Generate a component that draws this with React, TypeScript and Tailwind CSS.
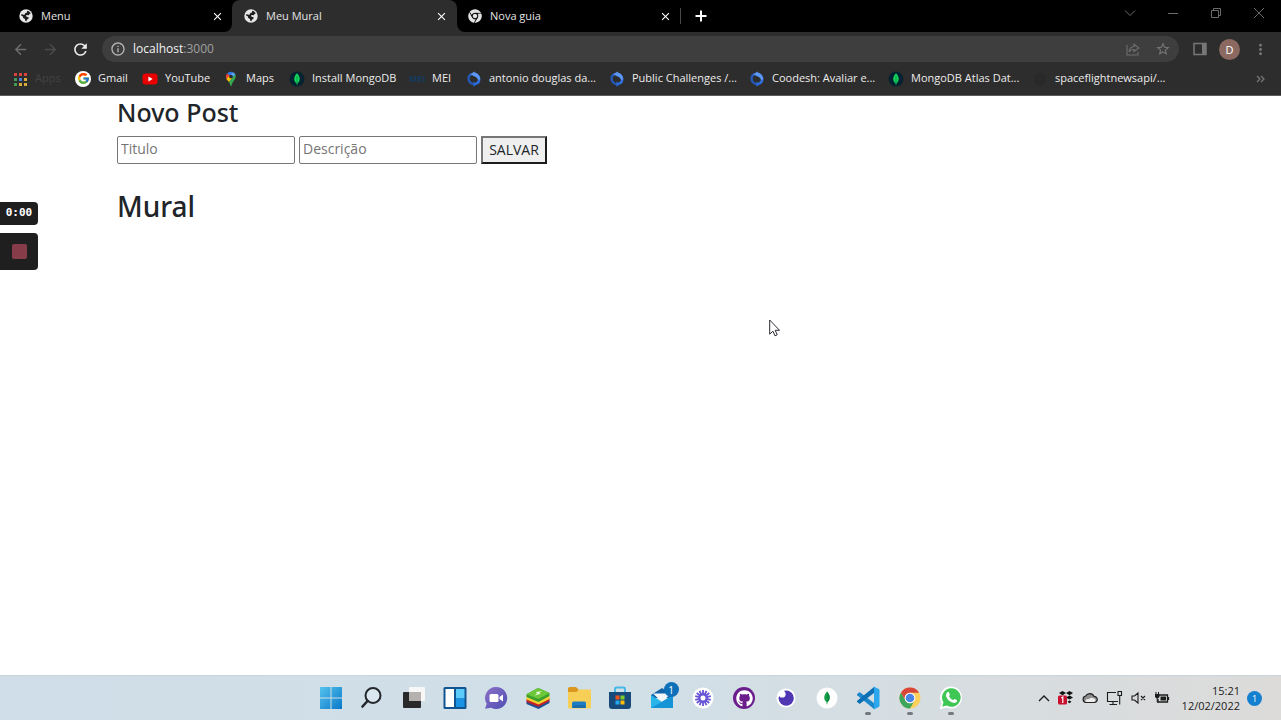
import type { ReactNode } from "react";
import { FaChrome, FaGithub } from "react-icons/fa";
import { FcGoogle } from "react-icons/fc";
import {
  MdArrowBack,
  MdArrowForward,
  MdClose,
  MdInfoOutline,
  MdMoreVert,
  MdOutlineStarBorder,
  MdRefresh,
} from "react-icons/md";

/* ---------- browser tabs ---------- */

function GlobeIcon() {
  return (
    <svg width="14" height="14">
      <circle cx="7" cy="7" r="6.700" fill="#e6e6e6" />
      <path d="M8.200 1.700c1.600.3 3 1.300 3.700 2.700l-1.200.3-.9 1.500-2.200-.2-.7 1 1.300.9 1.500.4-.3 1.400-1.500 1-.5 1.600-1-.2-.5-2-1.900-1.300-.2-1.500L2 6.500l.6-1.600 1.600.9 1.600-.3.600-1.500 1.600-.6z" fill="#1c1c1c" />
    </svg>
  );
}

function Tab({ title, icon, active, className }: { title: string; icon: ReactNode; active?: boolean; className: string }) {
  return (
    <div
      role="tab"
      aria-selected={!!active}
      className={`flex h-8 min-w-0 items-center gap-2 text-[11px] text-[#e4e4e4] ${active ? "rounded-t-lg bg-[#2d2d2d]" : "bg-black"} ${className}`}
    >
      {icon}
      <span className="grow truncate">{title}</span>
      <button type="button" aria-label={`Fechar ${title}`} className="text-white">
        <MdClose size={13} />
      </button>
    </div>
  );
}

function WindowControls() {
  return (
    <div className="ml-auto flex h-[26px] items-center pr-px text-[#6b6b6b]">
      <button type="button" aria-label="Pesquisar guias" className="flex w-[43px] justify-center">
        <svg width="12" height="12" fill="none" stroke="currentColor"><path d="M1 3.500 6 8.500l5-5" /></svg>
      </button>
      <button type="button" aria-label="Minimizar" className="flex w-[43px] justify-center">
        <svg width="12" height="12" fill="none" stroke="currentColor"><path d="M1 6.500h10" /></svg>
      </button>
      <button type="button" aria-label="Restaurar" className="flex w-[43px] justify-center">
        <svg width="12" height="12" fill="none" stroke="currentColor"><path d="M1.500 3.500h7v7h-7zM3.500 3V1.500h7v7H9" /></svg>
      </button>
      <button type="button" aria-label="Fechar" className="flex w-[43px] justify-center">
        <svg width="12" height="12" fill="none" stroke="currentColor"><path d="m1 1 10 10M11 1 1 11" /></svg>
      </button>
    </div>
  );
}

/* ---------- bookmark icons ---------- */

const dots = ["#d9453d", "#d9453d", "#d9453d", "#3f9a57", "#4a7fd6", "#d9a93a", "#3f9a57", "#d9a93a", "#d9a93a"];

function AppsIcon() {
  return (
    <svg width="16" height="16">
      {dots.map((c, i) => (
        <rect key={i} x={2 + (i % 3) * 5} y={2 + Math.floor(i / 3) * 5} width="3" height="3" fill={c} />
      ))}
    </svg>
  );
}

function GmailIcon() {
  return (
    <span className="flex size-4 items-center justify-center rounded-full bg-white">
      <FcGoogle size={13} />
    </span>
  );
}

function YouTubeIcon() {
  return (
    <svg width="16" height="16">
      <rect x="0.500" y="2.500" width="15" height="11" rx="3" fill="#e80000" />
      <path d="M6.400 5.600v4.800L10.600 8z" fill="#fff" />
    </svg>
  );
}

function MapsIcon() {
  return (
    <svg width="16" height="16" viewBox="0 0 16 16">
      <path d="M8 .8A5 5 0 0 0 4.100 2.600L7 5 10 1.200A5 5 0 0 0 8 .8z" fill="#2f7bea" />
      <path d="M4.100 2.600A5 5 0 0 0 3.400 8L7 5z" fill="#e94335" />
      <path d="M10 1.200 6.300 5.500 9.500 7.700 12.300 3.300A5 5 0 0 0 10 1.200z" fill="#5aa8f5" />
      <path d="M3.400 8 6.400 4.500 9.600 7.200 5.900 11z" fill="#fbbc04" />
      <path d="M12.300 3.300C14.200 8.300 9.200 10 8.600 14.600c-.2 1-1 1-1.200 0-.3-1.500-.8-2.500-1.500-3.600z" fill="#34a853" />
      <circle cx="8" cy="5.600" r="1.900" fill="#2d2d2d" />
    </svg>
  );
}

function MongoIcon() {
  return (
    <svg width="16" height="16">
      <circle cx="8" cy="8" r="7.500" fill="#04222f" />
      <path d="M8 2.200c4 4 3.200 8 .4 10v1.600h-.8v-1.600C4.800 10.200 4 6.200 8 2.200z" fill="#12d65c" />
      <path d="M8 5v8" stroke="#0b8c42" strokeWidth=".8" />
    </svg>
  );
}

function MeiIcon() {
  return <span className="w-4 text-center text-[9px] font-bold text-[#123c60]">MEI</span>;
}

function CoodeshIcon() {
  return (
    <svg width="16" height="16" fill="none">
      <path d="M5.500 3.200C.8 5.500 2 12 7.600 13.200" stroke="#2459b8" strokeWidth="2.400" />
      <path d="M10.200 12.600C15 10.500 14 4 8.400 2.800" stroke="#2f6fe0" strokeWidth="2.400" />
      <path d="M8.600.4 4.200 3.300 8.600 5.400c2 .6 3.200 2 3.400 3.800l2.200-1C14 5 11.800 2.200 8.600 1.600z" fill="#5b97f5" />
      <path d="m7.400 15.800 4.500-3-4.500-2z" fill="#2c69d8" />
    </svg>
  );
}

function BlankIcon() {
  return <span className="size-3 rounded-full bg-[#292929]" />;
}

const bookmarks: { label: string; icon: ReactNode; width: string; dim?: boolean }[] = [
  { label: "Apps", icon: <AppsIcon />, width: "w-[63px]", dim: true },
  { label: "Gmail", icon: <GmailIcon />, width: "w-[67px]" },
  { label: "YouTube", icon: <YouTubeIcon />, width: "w-[81px]" },
  { label: "Maps", icon: <MapsIcon />, width: "w-[66px]" },
  { label: "Install MongoDB", icon: <MongoIcon />, width: "w-[120px]" },
  { label: "MEI", icon: <MeiIcon />, width: "w-[57px]" },
  { label: "antonio douglas da...", icon: <CoodeshIcon />, width: "w-[143px]" },
  { label: "Public Challenges /...", icon: <CoodeshIcon />, width: "w-[140px]" },
  { label: "Coodesh: Avaliar e...", icon: <CoodeshIcon />, width: "w-[139px]" },
  { label: "MongoDB Atlas Dat...", icon: <MongoIcon />, width: "w-[144px]" },
  { label: "spaceflightnewsapi/...", icon: <BlankIcon />, width: "w-[150px]" },
];

/* ---------- taskbar icons ---------- */

function StartIcon() {
  return (
    <svg width="24" height="24">
      <defs>
        <linearGradient id="win" x1="0" y1="0" x2="1" y2="1">
          <stop offset="0" stopColor="#55c3ee" />
          <stop offset="1" stopColor="#0a78c8" />
        </linearGradient>
      </defs>
      <path d="M1 1h10.500v10.500H1zM12.500 1H23v10.500H12.500zM1 12.500h10.500V23H1zM12.500 12.500H23V23H12.500z" fill="url(#win)" />
    </svg>
  );
}

function SearchIcon() {
  return (
    <svg width="24" height="24" fill="none" stroke="#23262a" strokeWidth="2">
      <circle cx="13" cy="9.500" r="7.500" fill="#dbe7ee" />
      <path d="m7.500 15-5 5.500" strokeWidth="2.600" strokeLinecap="round" />
    </svg>
  );
}

function TaskViewIcon() {
  return (
    <svg width="24" height="24">
      <rect x="1" y="6" width="18" height="16" rx="1" fill="#29292b" />
      <rect x="7" y="1" width="16" height="14" rx="1" fill="#f7f7f7" />
      <path d="M7 6h12v9H7z" fill="#b5b1ae" />
    </svg>
  );
}

function WidgetsIcon() {
  return (
    <svg width="24" height="24">
      <rect x=".5" y="1" width="23" height="22" rx="1.500" fill="#11548f" />
      <path d="M2.500 3H11v18H2.500z" fill="#fff" />
      <path d="M13 3h8.500v9.500H13z" fill="#5bcbfa" />
      <path d="M13 12.500h8.500V21H13z" fill="#1b93e4" />
    </svg>
  );
}

function ChatIcon() {
  return (
    <svg width="24" height="24">
      <defs>
        <linearGradient id="chat" x1="0" y1="0" x2="1" y2="1">
          <stop offset="0" stopColor="#8b6fc6" />
          <stop offset="1" stopColor="#4e50b5" />
        </linearGradient>
      </defs>
      <path d="M12 1a11 11 0 1 1-4.800 20.800L1 22.800l1.700-5A11 11 0 0 1 12 1z" fill="url(#chat)" />
      <rect x="5.500" y="8" width="9" height="8" rx="1.500" fill="#fff" />
      <path d="m15.500 11 3.500-2.500v7L15.500 13z" fill="#fff" />
    </svg>
  );
}

function BlueStacksIcon() {
  return (
    <svg width="24" height="24">
      <path d="m.5 15.500 11.500-6 11.500 5v2.500L12.500 23 .5 18z" fill="#1c4f94" />
      <path d="m.5 13 11.500-6 11.500 5v3l-11 5.800L.5 16z" fill="#c62026" />
      <path d="m.5 11 11.500-6 11.500 5v3l-11 5.500-12-5z" fill="#f2d230" />
      <path d="M.5 8.200 11 2.500q1.200-.7 2.500 0l10 4.500v3l-11 6-12-5z" fill="#3c9f2d" />
      <path d="M.5 8.200 11 2.500q1.200-.7 2.500 0l10 4.500-11 6z" fill="#6cc83a" />
      <path d="m10 6 6-1-3 2 2 .8-6.500 1.700L11 7.500z" fill="#e7f8d9" />
    </svg>
  );
}

function ExplorerIcon() {
  return (
    <svg width="24" height="24">
      <path d="M1 3q0-2 2-2h6l2.500 2.500V7H1z" fill="#d9971e" />
      <path d="M1 6h8.500L12 3.500h11q1 0 1 1V21q0 1.500-1.500 1.500h-20Q1 22.500 1 21z" fill="#f8cf56" />
      <path d="M5 22V17q0-1.500 1.500-1.500h11Q19 15.500 19 17v5z" fill="#1d7dc2" />
      <path d="M6 19h12v3H6z" fill="#1b6ca8" />
    </svg>
  );
}

function StoreIcon() {
  return (
    <svg width="24" height="24">
      <path d="M7 7V3q0-1.500 1.500-1.500h7Q17 1.500 17 3v4" fill="none" stroke="#48b8e8" strokeWidth="2" />
      <path d="M1 6h22v14q0 3-3 3H4q-3 0-3-3z" fill="#174a7a" />
      <path d="M7.500 9.500h4v4h-4z" fill="#f1511b" />
      <path d="M12.500 9.500h4v4h-4z" fill="#80cc28" />
      <path d="M7.500 14.500h4v4h-4z" fill="#22a7ef" />
      <path d="M12.500 14.500h4v4h-4z" fill="#fbbc09" />
    </svg>
  );
}

function MailIcon() {
  return (
    <span className="relative">
      <svg width="24" height="24">
        <path d="M1 9 12 2l11 7v3H1z" fill="#1464a8" />
        <path d="M3 7.500h18L12 16z" fill="#f4f8fb" />
        <path d="M1 9l11 7 11-7v13H1z" fill="#28b5e9" />
        <path d="M1 22 23 9.500V22z" fill="#1595d6" />
      </svg>
      <span className="absolute -top-1 left-[14px] flex size-[15px] items-center justify-center rounded-full bg-[#0f70ba] text-[10px] leading-none text-white">
        1
      </span>
    </span>
  );
}

const rays = Array.from({ length: 14 }, (_, i) => (i * 360) / 14);

function LoomIcon() {
  return (
    <svg width="24" height="24">
      <circle cx="12" cy="12" r="10.500" fill="#fff" />
      <g stroke="#6654d6" strokeWidth="1.800">
        {rays.map((a) => (
          <path key={a} d="M12 4v4.500" transform={`rotate(${a} 12 12)`} />
        ))}
      </g>
      <circle cx="12" cy="12" r="3.600" fill="none" stroke="#6654d6" strokeWidth="2.200" />
    </svg>
  );
}

function GithubDesktopIcon() {
  return (
    <span className="flex size-[22px] items-center justify-center rounded-full bg-[#6b1d8c]">
      <span className="flex size-[17px] items-center justify-center rounded-full bg-[#6b1d8c] text-white">
        <FaGithub size={17} />
      </span>
    </span>
  );
}

function InsomniaIcon() {
  return (
    <svg width="24" height="24">
      <circle cx="12" cy="12" r="9.500" fill="#fff" />
      <circle cx="12.200" cy="12.200" r="7.600" fill="#4f37b4" />
      <circle cx="8.200" cy="8.200" r="3.400" fill="#fff" />
    </svg>
  );
}

function CompassIcon() {
  return (
    <svg width="24" height="24">
      <circle cx="12" cy="12" r="10.500" fill="#fdfefd" />
      <path d="M12 5.500c4 4.500 3.200 8.500.4 10.700v2h-.8v-2C8.800 14 8 10 12 5.500z" fill="#13a14a" />
      <path d="M12 5.500c4 4.500 3.200 8.500.4 10.700H12z" fill="#0f8a41" />
    </svg>
  );
}

function VsCodeIcon() {
  return (
    <svg width="24" height="24">
      <path d="m1 8.200 2-1.700q.6-.4 1.200 0L18 17v6L1.200 9.300q-.5-.6-.2-1.100z" fill="#1a86cc" />
      <path d="m1 15.800 2 1.700q.6.400 1.200 0L18 7V1L1.200 14.700q-.5.600-.2 1.100z" fill="#0d70b4" />
      <path d="M17 .8q.5-.3 1.200 0l4.500 2.200q.8.400.8 1.300v15.400q0 .9-.8 1.300l-4.500 2.200q-.7.300-1.200 0Q18 22.500 18 21.500v-19Q18 1.500 17 .8z" fill="#2ca6ec" />
    </svg>
  );
}

function ChromeIcon() {
  return (
    <svg width="24" height="24">
      <circle cx="12" cy="12" r="10.500" fill="#fbd05c" />
      <path d="M2.900 6.700A10.500 10.500 0 0 1 21.100 6.700H12a5.300 5.300 0 0 0-4.600 7.900z" fill="#d8453b" />
      <path d="M2.900 6.700A10.500 10.500 0 0 0 12 22.500l4.600-7.900a5.300 5.300 0 0 1-9.200 0z" fill="#3fa45c" />
      <circle cx="12" cy="12" r="5.300" fill="#fff" />
      <circle cx="12" cy="12" r="4.300" fill="#4a84e4" />
    </svg>
  );
}

function WhatsAppIcon() {
  return (
    <svg width="24" height="24">
      <path d="M12.500.5A11 11 0 1 1 7.200 21.400L.8 23.200l1.800-6.200A11 11 0 0 1 12.500.5z" fill="#fff" />
      <path d="M12.500 2.200A9.300 9.300 0 1 1 7.600 19.500l-4.400 1.300 1.300-4.300A9.300 9.300 0 0 1 12.500 2.200z" fill="#3fc655" />
      <path d="M8.400 6.300c.7-.7 1.300-.5 1.600.2l.8 1.900c.2.600-.9 1.500-.7 1.900.8 1.700 2 2.900 3.800 3.700.5.200 1.200-1.200 1.800-1l1.900.9c.6.300.6.700.4 1.300-.7 1.900-2.800 2-4.700 1.300-3-1.100-4.900-3-6-5.700-.6-1.700-.2-3.300 1.100-4.500z" fill="#fff" />
    </svg>
  );
}

const apps: { name: string; icon: ReactNode; running?: boolean }[] = [
  { name: "Iniciar", icon: <StartIcon /> },
  { name: "Pesquisar", icon: <SearchIcon /> },
  { name: "Visão de tarefas", icon: <TaskViewIcon /> },
  { name: "Widgets", icon: <WidgetsIcon /> },
  { name: "Chat", icon: <ChatIcon /> },
  { name: "BlueStacks", icon: <BlueStacksIcon /> },
  { name: "Explorador de Arquivos", icon: <ExplorerIcon /> },
  { name: "Microsoft Store", icon: <StoreIcon /> },
  { name: "Email", icon: <MailIcon /> },
  { name: "Loom", icon: <LoomIcon /> },
  { name: "GitHub Desktop", icon: <GithubDesktopIcon /> },
  { name: "Insomnia", icon: <InsomniaIcon /> },
  { name: "MongoDB Compass", icon: <CompassIcon /> },
  { name: "Visual Studio Code", icon: <VsCodeIcon />, running: true },
  { name: "Google Chrome", icon: <ChromeIcon />, running: true },
  { name: "WhatsApp", icon: <WhatsAppIcon />, running: true },
];

function Tray() {
  return (
    <div className="flex items-center justify-end pr-[19px] text-[#1c1c1c]">
      <div className="flex items-center gap-2">
        <svg width="12" height="16" fill="none" stroke="currentColor" strokeWidth="1.300"><path d="m1 11 5-5 5 5" /></svg>
        <svg width="16" height="18">
          <path d="m4.500 2 3.500 2-3.500 2.200L1 4zM11.500 2 15 4l-3.500 2.200L8 4zM11.500 6.500 15 8.500l-3.500 2L8 8.500zM11.500 11.500l2 1.200-2 1.500-2-1.500z" fill="#111" />
          <rect x="0" y="6.500" width="9" height="9" rx="1.500" fill="#c8102e" />
          <path d="M3.300 9 4.800 8v6" fill="none" stroke="#fff" strokeWidth="1.200" />
        </svg>
        <svg width="16" height="16">
          <path d="M4 12.500a3.300 3.300 0 0 1-.3-6.500 4.600 4.600 0 0 1 8.300.3 3.100 3.100 0 0 1 .3 6.200z" fill="#8d8d8d" stroke="#222" strokeWidth="1.200" />
          <path d="M3 11.200Q4 8.500 7 9q3-2.500 6.500.5.500 2.300-1.500 2.400H4.500z" fill="#ededed" />
        </svg>
        <svg width="17" height="16" fill="none" stroke="currentColor" strokeWidth="1.100">
          <path d="M10 2.500H1.500v9H12M7 11.500v3M3.500 14.500H11M12 1.500h3.500v4H12zM13.700 5.500v9" />
        </svg>
        <svg width="15" height="14" fill="none" stroke="currentColor" strokeWidth="1.100">
          <path d="M1 5h2.500l3.500-3v10L3.500 9H1zM10 5l4 4M14 5l-4 4" />
        </svg>
        <svg width="16" height="14">
          <path d="M5 4h8.500v7H4V8M14.500 6v3" fill="none" stroke="currentColor" strokeWidth="1.300" />
          <path d="M6.500 5.500H12v4H6.500zM1 3h4.500v3L4.200 7.200H2.300L1 6z" fill="currentColor" />
          <path d="M2 1v2M4.500 1v2M3.200 7v4H5" fill="none" stroke="currentColor" />
        </svg>
      </div>
      <div className="ml-3 text-right text-[11px] leading-[15px]">
        <div>15:21</div>
        <div>12/02/2022</div>
      </div>
      <span className="ml-[7px] flex size-[15px] items-center justify-center rounded-full bg-[#1580d0] text-[9px] leading-none text-white">1</span>
    </div>
  );
}

export default function App() {
  return (
    <div className="relative flex min-h-screen flex-col bg-white font-['Open_Sans','Noto_Sans',sans-serif] text-[#212529]">
      <header>
        <div className="flex bg-black">
          <div role="tablist" className="flex bg-[#2d2d2d]">
            <Tab title="Menu" icon={<GlobeIcon />} className="w-[232px] rounded-br-lg pr-2 pl-[19px]" />
            <div className="bg-black">
              <Tab title="Meu Mural" icon={<GlobeIcon />} active className="w-[225px] pr-[9px] pl-3" />
            </div>
            <Tab title="Nova guia" icon={<FaChrome size={14} />} className="w-[223px] rounded-bl-lg pr-2 pl-[11px]" />
          </div>
          <span className="my-2 w-px bg-[#4a4a4a]" />
          <button type="button" aria-label="Nova guia" className="flex w-10 items-center justify-center text-white">
            <svg width="12" height="12" stroke="currentColor" strokeWidth="2"><path d="M6 .5v11M.5 6h11" /></svg>
          </button>
          <WindowControls />
        </div>

        <div className="border-b border-[#5a5a5a] bg-[#2d2d2d]">
          <div className="flex items-center pt-1 pr-3 pl-3">
            <button type="button" aria-label="Voltar" className="text-[#6e6e6e]"><MdArrowBack size={17} /></button>
            <button type="button" aria-label="Avançar" className="ml-[13px] text-[#4c4c4c]"><MdArrowForward size={17} /></button>
            <button type="button" aria-label="Recarregar" className="ml-3 text-[#eeeeee]"><MdRefresh size={19} /></button>
            <div className="ml-3 flex h-[26px] grow items-center rounded-full bg-[#3e3e3e] px-2 text-xs text-[#a0a0a0]">
              <MdInfoOutline size={16} className="text-[#b4b4b4]" />
              <span className="ml-[7px] grow">
                <span className="text-[#f2f2f2]">localhost</span>:3000
              </span>
              <button type="button" aria-label="Compartilhar" className="text-[#6c6c6c]">
                <svg width="16" height="16" fill="none" stroke="currentColor" strokeWidth="1.200">
                  <path d="M2 4v10h11v-3M9 3.200 13.800 7 9 10.500V8.500Q5.500 8.500 4 11q.5-5 5-5.500z" />
                </svg>
              </button>
              <button type="button" aria-label="Favoritar" className="ml-[14px] text-[#777777]"><MdOutlineStarBorder size={16} /></button>
            </div>
            <button type="button" aria-label="Painel lateral" className="ml-[14px] text-[#777777]">
              <svg width="14" height="14"><path d="M1 1.500h12v11H1z" fill="none" stroke="currentColor" strokeWidth="1.500" /><path d="M9 1h4v12H9z" fill="currentColor" /></svg>
            </button>
            <button type="button" aria-label="Perfil" className="ml-3 size-[21px] rounded-full bg-[#8b6961] text-[11px] leading-none text-white">D</button>
            <button type="button" aria-label="Menu do navegador" className="ml-3 text-[#777777]"><MdMoreVert size={17} /></button>
          </div>
          <nav aria-label="Favoritos" className="flex h-[33px] items-center pr-4 pl-3 text-[11px]">
            {bookmarks.map((b) => (
              <a key={b.label} href="#" className={`flex shrink-0 items-center gap-[7px] whitespace-nowrap ${b.width} ${b.dim ? "text-[#424242]" : "text-[#ececec]"}`}>
                <span className="flex w-4 shrink-0 justify-center">{b.icon}</span>
                {b.label}
              </a>
            ))}
            <button type="button" aria-label="Mais favoritos" className="ml-auto text-[#777777]">
              <svg width="9" height="8" fill="none" stroke="currentColor" strokeWidth="1.300"><path d="m1 1 3 3-3 3M5 1l3 3-3 3" /></svg>
            </button>
          </nav>
        </div>
      </header>

      <main className="grow">
        <div className="mx-auto max-w-[1047px]">
          <h3 className="pb-2 font-['Noto_Sans','Open_Sans',sans-serif] text-[25px] leading-8 font-medium">Novo Post</h3>
          <form className="flex items-center gap-1" onSubmit={(e) => e.preventDefault()}>
            <input type="text" aria-label="Titulo" placeholder="Titulo" className="h-7 w-[178px] rounded-xs border border-[#767676] px-[3px] pb-[3px] text-sm placeholder:text-[#757575]" />
            <input type="text" aria-label="Descrição" placeholder="Descrição" className="h-7 w-[178px] rounded-xs border border-[#767676] px-[3px] pb-[3px] text-sm placeholder:text-[#757575]" />
            <button type="submit" className="h-7 w-[66px] border-2 border-t-[#767676] border-r-[#1c1c1c] border-b-[#1c1c1c] border-l-[#767676] bg-[#efefef] text-sm leading-none">SALVAR</button>
          </form>
          <h2 className="mt-6 font-['Noto_Sans','Open_Sans',sans-serif] text-[28px] leading-9 font-medium">Mural</h2>
        </div>
      </main>

      <footer className="grid h-[45px] grid-cols-[1fr_662px_1fr] border-t border-[#ccd5da] bg-linear-to-r from-[#cfdee8] via-[#d1dfe7] to-[#dcdbda]">
        <div />
        <div className="grid grid-cols-16 pl-px">
          {apps.map((a) => (
            <button key={a.name} type="button" aria-label={a.name} className="relative flex items-center justify-center">
              {a.icon}
              {a.running && <span className="absolute bottom-[5px] h-[3px] w-[6px] rounded-full bg-[#73797d]" />}
            </button>
          ))}
        </div>
        <Tray />
      </footer>

      <div className="absolute top-[202px] left-0 flex flex-col gap-2">
        <div className="flex h-[23px] w-[38px] items-center justify-center rounded-r bg-[#1f1f20] font-['DejaVu_Sans_Mono',monospace] text-[11px] font-bold text-white">0:00</div>
        <button type="button" aria-label="Parar gravação" className="flex h-[37px] w-[38px] items-center justify-center rounded-r bg-[#1f1f20]">
          <span className="size-[15px] rounded-xs bg-[#863d49]" />
        </button>
      </div>

      <svg width="12" height="18" className="pointer-events-none absolute top-[319px] left-[769px]">
        <path d="M.7 1v14.200l3.200-3 2.100 4.600 2.200-1-2-4.500h4.300z" fill="#fff" stroke="#2b2b35" />
      </svg>
    </div>
  );
}
